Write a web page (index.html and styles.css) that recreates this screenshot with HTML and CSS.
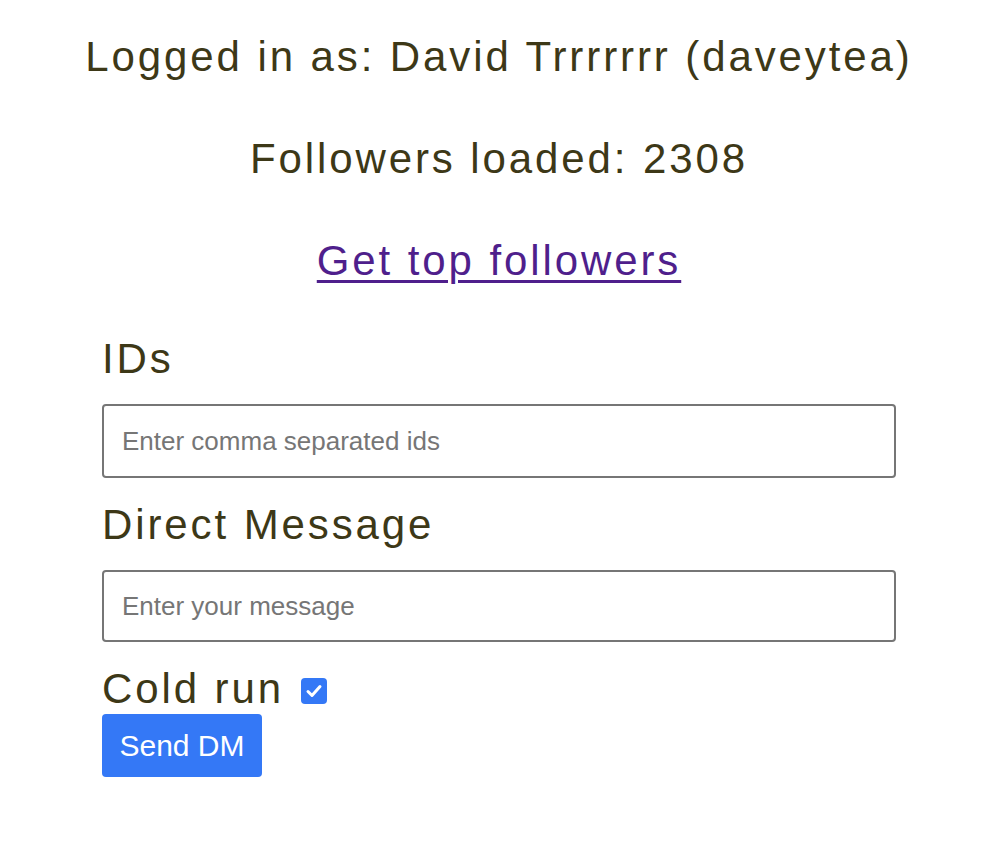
FILE: index.html
```html
<!DOCTYPE html>
<html>
<head>
<meta charset="utf-8">
<link rel="stylesheet" href="styles.css">
</head>
<body>
<main class="page">
  <p class="title">Logged in as: David Trrrrrrr (daveytea)</p>
  <p class="title">Followers loaded: 2308</p>
  <p class="title title-last"><a class="link" href="#">Get top followers</a></p>
  <form class="form">
    <label class="label" for="ids">IDs</label>
    <input class="field" id="ids" type="text" placeholder="Enter comma separated ids">
    <label class="label label-dm" for="msg">Direct Message</label>
    <input class="field field-dm" id="msg" type="text" placeholder="Enter your message">
    <div class="cold">
      <span class="label">Cold run</span>
      <span class="check"><svg viewBox="0 0 26 26" width="26" height="26"><rect x="0" y="0" width="26" height="26" rx="4" fill="#3478f6"/><path d="M7 13.5 L11 17.5 L19 8.5" fill="none" stroke="#fff" stroke-width="3" stroke-linecap="round" stroke-linejoin="round"/></svg></span>
    </div>
    <button class="btn" type="button">Send DM</button>
  </form>
</main>
</body>
</html>
```
FILE: styles.css
```css
html, body {
  margin: 0;
  padding: 0;
  background: #ffffff;
}
body {
  font-family: "Liberation Sans", Arial, Helvetica, sans-serif;
  color: #3d3817;
}
.page {
  padding-top: 32px;
}
.title {
  margin: 0 0 52px 0;
  text-align: center;
  font-size: 42px;
  line-height: 50px;
  letter-spacing: 2.9px;
}
.title-last {
  margin-bottom: 48px;
}
.link {
  color: #4f1f8c;
  text-decoration: underline;
  text-decoration-thickness: 3px;
  text-underline-offset: 5px;
}
.form {
  width: 794px;
  margin: 0 auto;
  display: flex;
  flex-direction: column;
  align-items: flex-start;
}
.label {
  font-size: 42px;
  line-height: 50px;
  letter-spacing: 2.9px;
  color: #3d3817;
}
.field {
  box-sizing: border-box;
  width: 100%;
  height: 74px;
  margin-top: 20px;
  padding: 0 18px;
  border: 2px solid #767676;
  border-radius: 4px;
  font-family: "Liberation Sans", Arial, sans-serif;
  font-size: 26px;
  color: #333;
  background: #fff;
}
.field::placeholder {
  color: #767676;
}
.label-dm {
  margin-top: 22px;
}
.field-dm {
  height: 72px;
}
.cold {
  display: flex;
  align-items: center;
  gap: 17px;
  margin-top: 22px;
}
.check {
  display: flex;
  margin-top: 4px;
}
.btn {
  width: 160px;
  height: 63px;
  margin-top: 0;
  border: none;
  border-radius: 4px;
  background: #3478f6;
  color: #fff;
  font-family: "Liberation Sans", Arial, sans-serif;
  font-size: 30px;
  padding: 0;
}
```
